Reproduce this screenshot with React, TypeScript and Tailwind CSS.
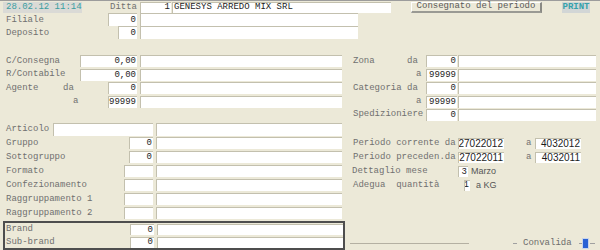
import React from 'react';

interface FieldProps {
  w: string;
  v?: string;
  h?: string;
  left?: boolean;
  sans?: boolean;
  cls?: string;
}

function Field({ w, v = '', h = 'h-[12px]', left, sans, cls = '' }: FieldProps) {
  return (
    <div
      className={`${w} ${h} ${cls} shrink-0 bg-white border-t border-l border-[#c3c0ae] flex items-center leading-none text-[#1c1c1c] whitespace-pre overflow-hidden ${
        left ? 'justify-start pl-[1px]' : 'justify-end pr-[1px]'
      } ${sans ? "font-['Liberation_Sans',Arial,sans-serif] text-[10px]" : ''}`}
    >
      {v}
    </div>
  );
}

function Lbl({ w, t = '', cls = '' }: { w: string; t?: string; cls?: string }) {
  return <span className={`${w} ${cls} shrink-0 whitespace-pre leading-none text-[#707070]`}>{t}</span>;
}

export default function App() {
  return (
    <div className="w-[600px] h-[250px] overflow-hidden bg-[#ece9d8] border-t border-[#9c9c9c] font-['Liberation_Mono','Courier_New',monospace] text-[9px] flex flex-col">
      {/* Header row */}
      <div className="flex items-center h-[13px]">
        <div className="ml-[3px] w-[79px] h-[11px] pl-[3px] bg-[#dadad6] text-[#3a9ea0] flex items-center leading-none">
          28.02.12 11:14
        </div>
        <Lbl w="w-[30px]" t="Ditta" cls="ml-[28px]" />
        <Field w="w-[31px]" h="h-[11px]" v="1" />
        <Field w="w-[219px]" h="h-[11px]" v="GENESYS ARREDO MIX SRL" left cls="ml-[1px]" />
        <div className="ml-[20px] w-[131px] h-[11px] border-t border-l border-white border-r-2 border-b-2 border-r-[#8a8a84] border-b-[#9a9a94] bg-[#ece9d8] flex items-center justify-center leading-none text-[#5a5a5a]">
          Consegnato del periodo
        </div>
        <div className="ml-[20px] w-[28px] h-[11px] bg-[#d2d6d6] text-[#36a2aa] font-bold flex items-center justify-center leading-none">
          PRINT
        </div>
      </div>

      <div className="flex items-start h-[14px] pl-[6px]">
        <Lbl w="w-[102px]" t="Filiale" cls="mt-[3px]" />
        <Field w="w-[29px]" h="h-[13px]" v="0" />
        <Field w="w-[218px]" h="h-[13px]" cls="ml-[3px]" />
      </div>
      <div className="flex items-start h-[14px] pl-[6px]">
        <Lbl w="w-[112px]" t="Deposito" cls="mt-[3px]" />
        <Field w="w-[19px]" h="h-[13px]" v="0" />
        <Field w="w-[218px]" h="h-[13px]" cls="ml-[3px]" />
      </div>

      <div className="flex mt-[15px] flex-1">
        {/* Left column */}
        <div className="w-[348px] flex flex-col">
          <div className="flex items-center h-[14px] pl-[6px]">
            <Lbl w="w-[74px]" t="C/Consegna" />
            <Field w="w-[57px]" v="0,00" />
            <Field w="w-[202px]" cls="ml-[3px]" />
          </div>
          <div className="flex items-center h-[13px] pl-[6px]">
            <Lbl w="w-[74px]" t="R/Contabile" />
            <Field w="w-[57px]" v="0,00" />
            <Field w="w-[202px]" cls="ml-[3px]" />
          </div>
          <div className="flex items-center h-[14px] pl-[6px]">
            <Lbl w="w-[57px]" t="Agente" />
            <Lbl w="w-[45px]" t="da" />
            <Field w="w-[29px]" v="0" />
            <Field w="w-[202px]" cls="ml-[3px]" />
          </div>
          <div className="flex items-center h-[13px] pl-[6px]">
            <Lbl w="w-[67px]" />
            <Lbl w="w-[35px]" t="a" />
            <Field w="w-[29px]" v="99999" />
            <Field w="w-[202px]" cls="ml-[3px]" />
          </div>

          <div className="flex items-center h-[14px] pl-[6px] mt-[14px]">
            <Lbl w="w-[47px]" t="Articolo" />
            <Field w="w-[100px]" h="h-[13px]" left />
            <Field w="w-[186px]" h="h-[13px]" cls="ml-[3px]" />
          </div>
          {[
            ['Gruppo', '0'],
            ['Sottogruppo', '0'],
            ['Formato', null],
            ['Confezionamento', null],
            ['Raggruppamento 1', null],
            ['Raggruppamento 2', null],
          ].map(([label, val]) => (
            <div key={label} className="flex items-center h-[14px] pl-[6px]">
              {val !== null ? (
                <>
                  <Lbl w="w-[123px]" t={label as string} />
                  <Field w="w-[24px]" v={val as string} />
                </>
              ) : (
                <>
                  <Lbl w="w-[118px]" t={label as string} />
                  <Field w="w-[29px]" />
                </>
              )}
              <Field w="w-[186px]" cls="ml-[3px]" />
            </div>
          ))}

          {/* Brand box */}
          <div className="ml-[3px] mt-[1px] w-[342px] h-[29px] border-2 border-[#4e4e4e] flex flex-col">
            <div className="flex items-center h-[13px] pl-[1px]">
              <Lbl w="w-[124px]" t="Brand" />
              <Field w="w-[24px]" h="h-[11px]" v="0" />
              <Field w="w-[186px]" h="h-[11px]" cls="ml-[3px]" />
            </div>
            <div className="flex items-center h-[12px] pl-[1px]">
              <Lbl w="w-[124px]" t="Sub-brand" />
              <Field w="w-[24px]" h="h-[11px]" v="0" />
              <Field w="w-[186px]" h="h-[11px]" cls="ml-[3px]" />
            </div>
          </div>
        </div>

        {/* Right column */}
        <div className="flex-1 flex flex-col pl-[5px]">
          <div className="flex items-center h-[14px]">
            <Lbl w="w-[54px]" t="Zona" />
            <Lbl w="w-[19px]" t="da" />
            <Field w="w-[31px]" v="0" />
            <Field w="w-[138px]" cls="ml-[1px]" />
          </div>
          <div className="flex items-center h-[13px]">
            <Lbl w="w-[63px]" />
            <Lbl w="w-[10px]" t="a" />
            <Field w="w-[31px]" v="99999" />
            <Field w="w-[138px]" cls="ml-[1px]" />
          </div>
          <div className="flex items-center h-[14px]">
            <Lbl w="w-[54px]" t="Categoria" />
            <Lbl w="w-[19px]" t="da" />
            <Field w="w-[31px]" v="0" />
            <Field w="w-[138px]" cls="ml-[1px]" />
          </div>
          <div className="flex items-center h-[13px]">
            <Lbl w="w-[63px]" />
            <Lbl w="w-[10px]" t="a" />
            <Field w="w-[31px]" v="99999" />
            <Field w="w-[138px]" cls="ml-[1px]" />
          </div>
          <div className="flex items-center h-[13px]">
            <Lbl w="w-[73px]" t="Spedizioniere" />
            <Field w="w-[31px]" v="0" />
            <Field w="w-[138px]" cls="ml-[1px]" />
          </div>

          <div className="flex items-center h-[13px] mt-[16px]">
            <Lbl w="w-[105px]" t="Periodo corrente da" />
            <Field w="w-[46px]" h="h-[11px]" v="27022012" sans />
            <Lbl w="w-[9px]" t="a" cls="ml-[22px]" />
            <Field w="w-[46px]" h="h-[11px]" v="4032012" sans />
          </div>
          <div className="flex items-center h-[14px]">
            <Lbl w="w-[105px]" t="Periodo preceden.da" />
            <Field w="w-[46px]" h="h-[11px]" v="27022011" sans />
            <Lbl w="w-[9px]" t="a" cls="ml-[22px]" />
            <Field w="w-[46px]" h="h-[11px]" v="4032011" sans />
          </div>
          <div className="flex items-center h-[15px]">
            <Lbl w="w-[106px]" t="Dettaglio mese" cls="-ml-[1px]" />
            <Field w="w-[10px]" h="h-[11px]" v="3" />
            <span className="ml-[3px] font-['Liberation_Sans',Arial,sans-serif] text-[9px] leading-none text-[#555555]">Marzo</span>
          </div>
          <div className="flex items-center h-[12px]">
            <Lbl w="w-[111px]" t="Adegua  quantità" />
            <Field w="w-[6px]" h="h-[11px]" v="1" />
            <span className="ml-[6px] font-['Liberation_Sans',Arial,sans-serif] text-[9px] leading-none text-[#555555]">a KG</span>
          </div>

          <div className="mt-auto mb-[1px] flex items-center h-[12px] -ml-[3px]">
            <div className="w-[119px] h-px bg-[#b4b0a2]" />
            <div className="ml-[44px] w-[4px] h-px bg-[#a0a0a0]" />
            <span className="ml-[6px] leading-none text-[#6c6c6c]">Convalida</span>
            <div className="ml-[7px] w-[3px] h-px bg-[#a0a0a0]" />
            <div className="w-[7px] h-[11px] bg-[#2a62d4] border border-[#c8d4ea]" />
            <div className="ml-[1px] w-[5px] h-px bg-[#a0a0a0]" />
          </div>
        </div>
      </div>
    </div>
  );
}
